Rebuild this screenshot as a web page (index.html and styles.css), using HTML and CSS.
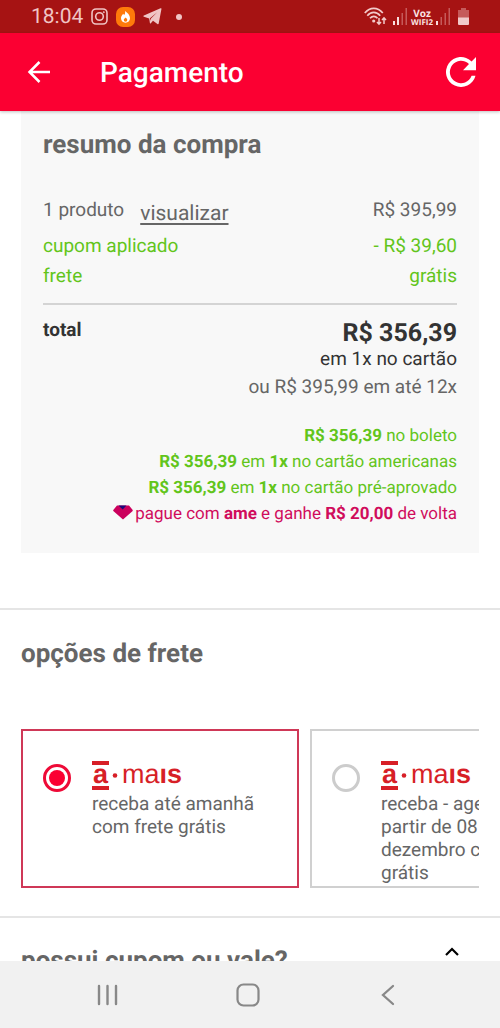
FILE: index.html
```html
<!DOCTYPE html>
<html lang="pt-BR">
<head>
<meta charset="utf-8">
<meta name="viewport" content="width=device-width, initial-scale=1">
<title>Pagamento</title>
<link rel="stylesheet" href="styles.css">
</head>
<body>
<div class="status">
  <div class="status-left">
    <span class="clock">18:04</span>
    <svg width="17" height="17" viewBox="0 0 17 17" fill="none" stroke="#f0c4c4" stroke-width="1.6"><rect x="1" y="1" width="15" height="15" rx="4"/><circle cx="8.500" cy="8.500" r="3.800"/><circle cx="12.800" cy="4.200" r=".6" fill="#f0c4c4" stroke-width=".8"/></svg>
    <svg width="19" height="20" viewBox="0 0 19 20"><rect width="19" height="20" rx="7" fill="#ff7a0a"/><path d="M9 4c.4 2-.1 3-.8 4-.5-.4-.7-.8-.8-1.300C5.800 8 5 9.600 5 11.300 5 14 7 15.700 9.500 15.700S14 14 14 11.300C14 8 11.500 5.800 9 4zM9.500 10.500c1.300 1 1.800 1.700 1.800 2.500a1.700 1.700 0 0 1-3.500 0c0-.9.900-1.500 1.700-2.500z" fill="#fff" fill-rule="evenodd"/></svg>
    <svg width="19" height="17" viewBox="0 0 19 17" fill="#f0c4c4"><path d="M18.500.8 15.700 15.500c-.1.700-.7.900-1.300.5L10 12.800l-2.200 2.400c-.4.400-.8.300-.9-.3l-.7-4.400L.9 8.700C.2 8.400.2 7.800.9 7.500L17.500.3c.7-.3 1.100 0 1 .5zM7 10.300l.6 2.500.4-2.300 6.200-6.300z"/></svg>
    <svg class="dot" width="6" height="6" viewBox="0 0 6 6"><circle cx="3" cy="3" r="3" fill="#f0c4c4"/></svg>
  </div>
  <div class="status-right">
    <svg class="wifi" width="23" height="19" viewBox="0 0 23 19" fill="none" stroke="#f3caca" stroke-width="1.700"><path d="M.8 6C6-.3 13.500-.3 18.800 6M3.300 8.700C7 4.300 12.500 4.300 16.200 8.700M6 11.300c2.300-2.700 5.300-2.700 7.500 0"/><circle cx="9.700" cy="14" r="1.600" fill="#f3caca" stroke="none"/><path d="M15 11v6M13 15l2 2.200 2-2.200M20 17v-6M18 13l2-2.200 2 2.200" stroke-width="1.500"/></svg>
    <svg width="15" height="17" viewBox="0 0 15 17"><path d="M0 13h2v4H0zM4 9h2v8H4z" fill="#f8dede"/><path d="M8.500 5h1.500v12H8.500zM12.500 0H14v17h-1.500z" fill="#c55a5a"/></svg>
    <span class="voz"><b>Voz</b><b class="wifi2">WIFI2</b></span>
    <svg width="15" height="17" viewBox="0 0 15 17"><path d="M0 13h2v4H0z" fill="#f8dede"/><path d="M4.500 9H6v8H4.500zM8.500 5h1.500v12H8.500zM12.500 0H14v17h-1.500z" fill="#c55a5a"/></svg>
    <svg class="battery" width="11" height="17" viewBox="0 0 11 17"><path d="M3 0h5v2h3v8H0V2h3z" fill="#c55a5a"/><path d="M0 9.500h11V16a1 1 0 0 1-1 1H1a1 1 0 0 1-1-1z" fill="#f0caca"/></svg>
  </div>
</div>
<header class="appbar">
  <button class="icon-btn" aria-label="Voltar"><svg width="24" height="24" viewBox="0 0 24 24" fill="none" stroke="#fff" stroke-width="2.500"><path d="M23 12H3M12.500 2 2.500 12l10 10"/></svg></button>
  <h1>Pagamento</h1>
  <button class="icon-btn" aria-label="Atualizar"><svg width="30" height="30" viewBox="0 0 30 30"><path d="M25.600 4.400A15 15 0 1 0 29.500 18.800h-3.900A11.200 11.200 0 1 1 23 7.100L17 13.200h13V0z" fill="#fff"/></svg></button>
</header>
<main>
  <section class="summary">
    <h2>resumo da compra</h2>
    <div class="row first"><span>1 produto</span><a href="#produtos">visualizar</a><span class="value">R$ 395,99</span></div>
    <div class="row green"><span>cupom aplicado</span><span class="value">- R$ 39,60</span></div>
    <div class="row green"><span>frete</span><span class="value">grátis</span></div>
    <div class="total">
      <b class="total-label">total</b>
      <div class="total-values">
        <b class="price">R$ 356,39</b>
        <span class="once">em 1x no cartão</span>
        <span class="split">ou R$ 395,99 em até 12x</span>
      </div>
    </div>
    <ul class="methods">
      <li><b>R$ 356,39</b> no boleto</li>
      <li><b>R$ 356,39</b> em <b>1x</b> no cartão americanas</li>
      <li><b>R$ 356,39</b> em <b>1x</b> no cartão pré-aprovado</li>
      <li class="ame"><svg width="20" height="15" viewBox="0 0 20 15"><path d="M4 .5h12l3.500 4.300c.4.500.3 1-.1 1.500L10 14.500.6 6.300c-.5-.5-.6-1-.1-1.500z" fill="#cb005d"/><path d="M5.500.5h8L9.700 4.500z" fill="#1b0a7a"/></svg>pague com <b>ame</b> e ganhe <b>R$ 20,00</b> de volta</li>
    </ul>
  </section>
  <section class="shipping">
    <h2>opções de frete</h2>
    <div class="options">
      <label class="option selected">
        <input type="radio" name="frete" checked>
        <span class="option-text">
          <svg class="logo" width="90" height="30" viewBox="0 0 90 30" fill="#d71f27"><path d="M0 0h17v4H0zM0 25h17v4H0z"/><circle cx="23" cy="14.500" r="2.300"/><text y="22"><tspan x="1" class="heavy">a</tspan><tspan x="30">ma</tspan><tspan class="heavy">ıs</tspan></text></svg>
          receba até amanhã com frete grátis
        </span>
      </label>
      <label class="option">
        <input type="radio" name="frete">
        <span class="option-text">
          <svg class="logo" width="90" height="30" viewBox="0 0 90 30" fill="#d71f27"><path d="M0 0h17v4H0zM0 25h17v4H0z"/><circle cx="23" cy="14.500" r="2.300"/><text y="22"><tspan x="1" class="heavy">a</tspan><tspan x="30">ma</tspan><tspan class="heavy">ıs</tspan></text></svg>
          receba - agende a partir de 08 de dezembro com frete grátis
        </span>
      </label>
    </div>
  </section>
  <section class="coupon">
    <h2>possui cupom ou vale?</h2>
    <button class="icon-btn" aria-label="Recolher"><svg width="14" height="9" viewBox="0 0 14 9" fill="none" stroke="#000" stroke-width="2.200"><path d="m1 8 6-6 6 6"/></svg></button>
  </section>
</main>
<nav class="navbar">
  <button class="icon-btn" aria-label="Recentes"><svg width="22" height="22" viewBox="0 0 22 22" stroke="#888" stroke-width="2.400" stroke-linecap="round"><path d="M2 2v18M10.500 2v18M19 2v18"/></svg></button>
  <button class="icon-btn" aria-label="Início"><svg width="24" height="24" viewBox="0 0 24 24" fill="none" stroke="#888" stroke-width="2.200"><rect x="1.500" y="1.500" width="21" height="21" rx="6"/></svg></button>
  <button class="icon-btn" aria-label="Voltar"><svg width="22" height="22" viewBox="0 0 22 22" fill="none" stroke="#888" stroke-width="2.300" stroke-linecap="round"><path d="M16 2 6 11l10 9"/></svg></button>
</nav>
</body>
</html>
```
FILE: styles.css
```css
* { box-sizing: border-box; }
body {
  margin: 0;
  height: 100vh;
  display: flex;
  flex-direction: column;
  background: #fff;
  color: #666;
  font: 19px/24px Roboto, sans-serif;
  text-rendering: geometricPrecision;
}
h1, h2, ul { margin: 0; padding: 0; }
h2 { font-size: 26px; line-height: 32px; font-weight: 700; }
svg { display: block; flex: none; }
.icon-btn {
  display: flex;
  padding: 0;
  border: 0;
  background: none;
}
.status {
  flex: none;
  display: flex;
  justify-content: space-between;
  align-items: center;
  height: 33px;
  padding: 0 31px;
  background: #a61313;
}
.status-left { display: flex; align-items: center; gap: 8px; }
.clock { color: #f0c4c4; font-size: 21px; }
.dot { margin-left: 6px; }
.status-right { display: flex; align-items: center; gap: 3px; }
.wifi { margin-right: 3px; }
.voz {
  display: flex;
  flex-direction: column;
  align-items: center;
  color: #fbe4e4;
  font: 10px/12px "Open Sans", sans-serif;
}
.wifi2 { font-size: 8px; line-height: 8px; }
.battery { margin-left: 4px; }
.appbar {
  flex: none;
  z-index: 1;
  display: flex;
  align-items: center;
  height: 78px;
  padding: 0 24px 0 27px;
  background: #fb0032;
  box-shadow: 0 1px 3px rgba(0, 0, 0, .25);
}
.appbar h1 {
  flex: 1;
  margin-left: 49px;
  padding-top: 2px;
  color: #fff;
  font-size: 28px;
  line-height: 32px;
  font-weight: 500;
}
main { flex: 1; min-height: 0; overflow: hidden; }
.summary {
  margin: 0 21px 55px;
  padding: 18px 22px 26px;
  background: #f8f8f8;
}
.summary h2 { margin-bottom: 37px; }
.row { display: flex; height: 30px; align-items: center; }
.row.first { height: 33px; align-items: flex-start; }
.row a {
  margin: 4px 0 0 16px;
  color: inherit;
  font-size: 21px;
  text-underline-offset: 3px;
}
.value { margin-left: auto; }
.green { color: #62c51b; }
.total {
  display: flex;
  justify-content: space-between;
  margin-top: 12px;
  padding-top: 13px;
  border-top: 2px solid #d4d4d4;
  color: #333;
}
.total-values { display: flex; flex-direction: column; align-items: flex-end; }
.price { font-size: 25px; line-height: 31px; }
.once { line-height: 20px; }
.split { margin-top: 6px; color: #666; }
.methods {
  margin-top: 24px;
  list-style: none;
  color: #62c51b;
  font-size: 17px;
  line-height: 26px;
  text-align: right;
}
.ame { display: flex; justify-content: flex-end; color: #d00c5c; white-space: pre; }
.ame svg { margin: 4px 2px 0 0; }
.shipping {
  padding: 28px 21px;
  border-top: 2px solid #e5e5e5;
}
.shipping h2 { margin-bottom: 59px; }
.options { display: flex; gap: 11px; overflow: hidden; }
.option {
  flex: none;
  display: flex;
  align-items: flex-start;
  gap: 21px;
  width: 278px;
  padding: 30px 20px 2px;
  border: 2px solid #d0d0d0;
  line-height: 23px;
}
.option.selected { border-color: #cf3857; }
.option input {
  flex: none;
  appearance: none;
  width: 28px;
  height: 28px;
  margin: 3px 0 0;
  padding: 3px;
  border: 3px solid #ccc;
  border-radius: 50%;
}
.option input:checked {
  border-color: #ee0a37;
  background: #fb0032 content-box;
}
.option-text { flex: 1; }
.logo { margin-bottom: 1px; }
.logo text { font: 27px "Liberation Sans", Arial, sans-serif; }
.logo .heavy { font-weight: 700; }
.coupon {
  display: flex;
  justify-content: space-between;
  align-items: flex-start;
  padding: 27px 41px 27px 21px;
  border-top: 2px solid #e5e5e5;
}
.coupon .icon-btn { margin-top: 2px; }
.navbar {
  flex: none;
  display: flex;
  justify-content: space-between;
  align-items: center;
  height: 67px;
  padding: 0 101px 0 97px;
  background: #f1f1f1;
}
```
